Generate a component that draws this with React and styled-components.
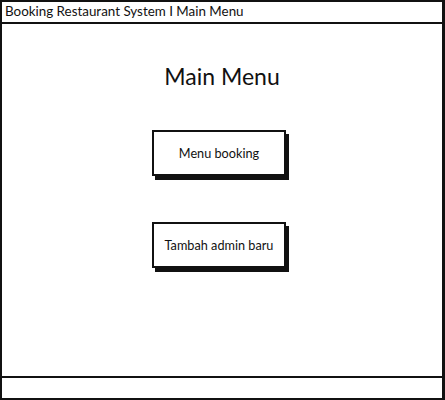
import React from "react";
import styled, { createGlobalStyle } from "styled-components";

const Global = createGlobalStyle`
  html, body { margin: 0; padding: 0; background: #fff; }
  body { font-family: "Lato", "Liberation Sans", sans-serif; color: #111; }
`;

const Frame = styled.div`
  box-sizing: border-box;
  width: 445px;
  height: 400px;
  border: 2px solid #111;
  border-right-width: 3px;
  display: flex;
  flex-direction: column;
  background: #fff;
`;

const TitleBar = styled.div`
  box-sizing: border-box;
  height: 22px;
  border-bottom: 2px solid #111;
  padding: 0 0 0 3px;
  font-size: 13.4px;
  line-height: 19px;
  white-space: nowrap;
`;

const Content = styled.div`
  flex: 1;
  display: flex;
  flex-direction: column;
  align-items: center;
  padding-top: 39px;
`;

const Heading = styled.h1`
  margin: 0 0 0 0;
  font-size: 23px;
  font-weight: 400;
  line-height: 27px;
`;

const Buttons = styled.div`
  display: flex;
  flex-direction: column;
  align-items: center;
  gap: 46px;
  margin-top: 40px;
  margin-right: 6px;
`;

const Button = styled.button`
  box-sizing: border-box;
  width: 134px;
  height: 46px;
  border: 2px solid #111;
  background: #fff;
  box-shadow: 3px 4px 0 #111;
  font-family: "Lato", "Liberation Sans", sans-serif;
  font-size: 12.7px;
  color: #111;
  padding: 0;
  cursor: pointer;
`;

const StatusBar = styled.div`
  box-sizing: border-box;
  height: 22px;
  border-top: 2px solid #111;
`;

export default function App() {
  return (
    <>
      <Global />
      <Frame>
        <TitleBar>Booking Restaurant System I Main Menu</TitleBar>
        <Content>
          <Heading>Main Menu</Heading>
          <Buttons>
            <Button>Menu booking</Button>
            <Button>Tambah admin baru</Button>
          </Buttons>
        </Content>
        <StatusBar />
      </Frame>
    </>
  );
}
